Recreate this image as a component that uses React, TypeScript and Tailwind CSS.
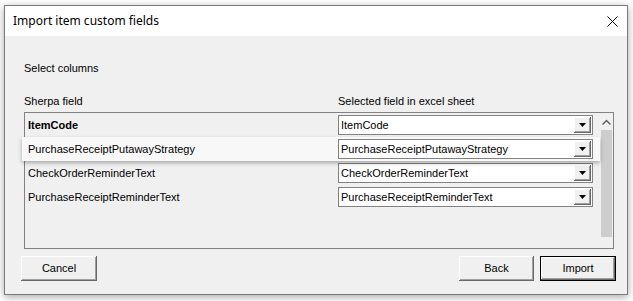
import React from "react";

const rows = [
  { name: "ItemCode", value: "ItemCode", bold: true },
  { name: "PurchaseReceiptPutawayStrategy", value: "PurchaseReceiptPutawayStrategy", lifted: true },
  { name: "CheckOrderReminderText", value: "CheckOrderReminderText" },
  { name: "PurchaseReceiptReminderText", value: "PurchaseReceiptReminderText" },
];

const classicBtn =
  "h-[25px] bg-[#f0f0f0] text-[11px] text-black shadow-[inset_-1px_-1px_#696969,inset_1px_1px_#ffffff,inset_-2px_-2px_#a0a0a0,inset_2px_2px_#f0f0f0]";

function Combo({ value }: { value: string }) {
  return (
    <div className="flex h-[20px] w-[255px] items-center border border-[#828282] bg-white">
      <div className="flex-1 truncate pl-[2px] leading-[14px]">{value}</div>
      <div className="mr-px flex h-[16px] w-[17px] items-center justify-center bg-[#f0f0f0] shadow-[inset_-1px_-1px_#696969,inset_1px_1px_#ffffff,inset_-2px_-2px_#a0a0a0]">
        <svg width="7" height="4" viewBox="0 0 7 4">
          <path d="M0 0h7L3.5 4z" fill="#000" />
        </svg>
      </div>
    </div>
  );
}

function Row({ name, value, bold, lifted }: { name: string; value: string; bold?: boolean; lifted?: boolean }) {
  return (
    <div
      className={
        lifted
          ? "relative z-10 -ml-[3px] flex h-[24px] w-[578px] items-center bg-[#f8f8f8] shadow-[0_2px_4px_rgba(0,0,0,0.3)]"
          : "flex h-[24px] items-center"
      }
    >
      <div className={(lifted ? "w-[316px] pl-[6px]" : "w-[313px] pl-[3px]") + (bold ? " font-bold" : "")}>{name}</div>
      <Combo value={value} />
    </div>
  );
}

export default function App() {
  return (
    <div
      className="h-[301px] w-[633px] overflow-hidden bg-white pl-[4px] pt-[5px] text-[11px] text-black"
      style={{ fontFamily: '"Liberation Sans", Arial, sans-serif' }}
    >
      <div className="flex h-[290px] w-[624px] flex-col border border-[#7a7a7a] bg-[#f0f0f0] shadow-[0_2px_8px_rgba(0,0,0,0.35)]">
        {/* title bar */}
        <div className="flex h-[30px] items-center justify-between bg-white pl-[8px] pr-[9px]">
          <span className="text-[12px]" style={{ fontFamily: '"Noto Sans", "Open Sans", sans-serif' }}>
            Import item custom fields
          </span>
          <svg width="11" height="11" viewBox="0 0 11 11">
            <path d="M0.5 0.5l10 10M10.5 0.5l-10 10" stroke="#000" strokeWidth="1" />
          </svg>
        </div>

        {/* body */}
        <div className="flex flex-1 flex-col pl-[19px] pr-[13px] pt-[26px]">
          <div className="h-[13px] leading-[13px]">Select columns</div>
          <div className="mt-[20px] flex h-[13px] leading-[13px]">
            <span className="w-[314px]">Sherpa field</span>
            <span>Selected field in excel sheet</span>
          </div>

          <div className="mt-[4px] flex h-[137px] border border-[#828282]">
            <div className="flex-1">
              {rows.map((r) => (
                <Row key={r.name} {...r} />
              ))}
            </div>
            <div className="flex w-[17px] flex-col bg-[#f0f0f0]">
              <div className="flex h-[17px] items-center justify-center">
                <svg width="9" height="6" viewBox="0 0 9 6">
                  <path d="M0.5 5.5l4-4 4 4" stroke="#606060" strokeWidth="1.5" fill="none" />
                </svg>
              </div>
              <div className="mx-px h-[107px] bg-[#cdcdcd]" />
            </div>
          </div>

          <div className="mt-[7px] flex items-center">
            <button className={classicBtn + " -ml-[3px] w-[76px]"}>Cancel</button>
            <div className="flex-1" />
            <button className={classicBtn + " w-[75px]"}>Back</button>
            <button className="ml-[6px] h-[25px] w-[76px] border border-black bg-[#f0f0f0] text-[11px] text-black shadow-[inset_-1px_-1px_#696969,inset_1px_1px_#ffffff,inset_-2px_-2px_#a0a0a0] -mr-[2px]">
              Import
            </button>
          </div>
        </div>
      </div>
    </div>
  );
}
